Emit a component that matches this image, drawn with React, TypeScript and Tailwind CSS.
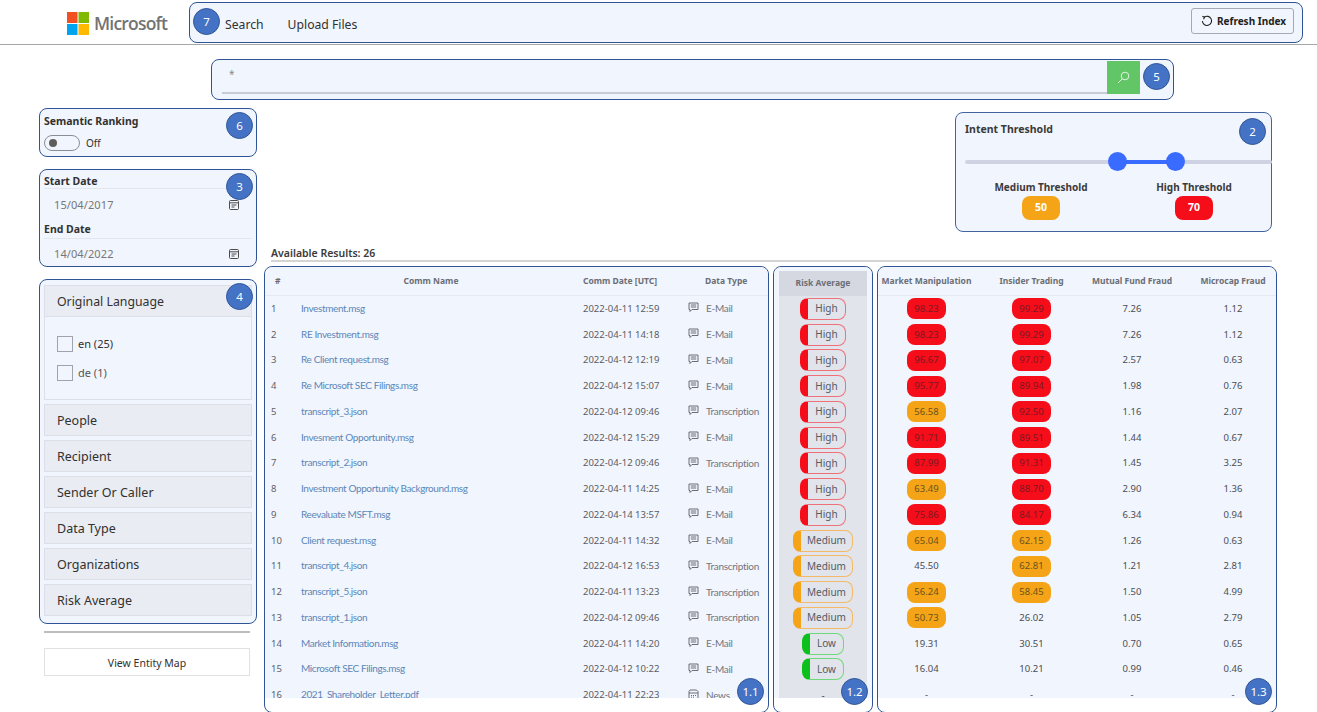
type Row = {
  id: number;
  name: string;
  date: string;
  type: string;
  risk: string;
  market: string;
  insider: string;
  mutual: string;
  microcap: string;
};

const E = "E-Mail";
const T = "Transcription";

const rows: Row[] = [
  { id: 1, name: "Investment.msg", date: "2022-04-11 12:59", type: E, risk: "High", market: "98.23", insider: "99.29", mutual: "7.26", microcap: "1.12" },
  { id: 2, name: "RE Investment.msg", date: "2022-04-11 14:18", type: E, risk: "High", market: "98.23", insider: "99.29", mutual: "7.26", microcap: "1.12" },
  { id: 3, name: "Re Client request.msg", date: "2022-04-12 12:19", type: E, risk: "High", market: "96.67", insider: "97.07", mutual: "2.57", microcap: "0.63" },
  { id: 4, name: "Re Microsoft SEC Filings.msg", date: "2022-04-12 15:07", type: E, risk: "High", market: "95.77", insider: "89.94", mutual: "1.98", microcap: "0.76" },
  { id: 5, name: "transcript_3.json", date: "2022-04-12 09:46", type: T, risk: "High", market: "56.58", insider: "92.50", mutual: "1.16", microcap: "2.07" },
  { id: 6, name: "Invesment Opportunity.msg", date: "2022-04-12 15:29", type: E, risk: "High", market: "91.71", insider: "89.51", mutual: "1.44", microcap: "0.67" },
  { id: 7, name: "transcript_2.json", date: "2022-04-12 09:46", type: T, risk: "High", market: "87.99", insider: "91.31", mutual: "1.45", microcap: "3.25" },
  { id: 8, name: "Investment Opportunity Background.msg", date: "2022-04-11 14:25", type: E, risk: "High", market: "63.49", insider: "88.70", mutual: "2.90", microcap: "1.36" },
  { id: 9, name: "Reevaluate MSFT.msg", date: "2022-04-14 13:57", type: E, risk: "High", market: "75.86", insider: "84.17", mutual: "6.34", microcap: "0.94" },
  { id: 10, name: "Client request.msg", date: "2022-04-11 14:32", type: E, risk: "Medium", market: "65.04", insider: "62.15", mutual: "1.26", microcap: "0.63" },
  { id: 11, name: "transcript_4.json", date: "2022-04-12 16:53", type: T, risk: "Medium", market: "45.50", insider: "62.81", mutual: "1.21", microcap: "2.81" },
  { id: 12, name: "transcript_5.json", date: "2022-04-11 13:23", type: T, risk: "Medium", market: "56.24", insider: "58.45", mutual: "1.50", microcap: "4.99" },
  { id: 13, name: "transcript_1.json", date: "2022-04-12 09:46", type: T, risk: "Medium", market: "50.73", insider: "26.02", mutual: "1.05", microcap: "2.79" },
  { id: 14, name: "Market Information.msg", date: "2022-04-11 14:20", type: E, risk: "Low", market: "19.31", insider: "30.51", mutual: "0.70", microcap: "0.65" },
  { id: 15, name: "Microsoft SEC Filings.msg", date: "2022-04-12 10:22", type: E, risk: "Low", market: "16.04", insider: "10.21", mutual: "0.99", microcap: "0.46" },
  { id: 16, name: "2021_Shareholder_Letter.pdf", date: "2022-04-11 22:23", type: "News", risk: "-", market: "-", insider: "-", mutual: "-", microcap: "-" },
];

const facets = ["People", "Recipient", "Sender Or Caller", "Data Type", "Organizations", "Risk Average"];

const Badge = ({ label, className }: { label: string; className: string }) => (
  <div
    className={`absolute z-10 flex h-[27px] w-[27px] items-center justify-center rounded-full border border-[#2f5597] bg-[#4472c4] text-[11.5px] text-white ${className}`}
  >
    {label}
  </div>
);

const CalendarIcon = () => (
  <svg width="12" height="12" viewBox="0 0 12 12" fill="none" stroke="#4a4a4a" strokeWidth="1">
    <rect x="1.5" y="1.5" width="9" height="9" rx="1" />
    <path d="M1.5 3.8h9M3.5 6h5M3.5 8h3" />
  </svg>
);

const MessageIcon = () => (
  <svg width="11" height="11" viewBox="0 0 11 11" fill="none" stroke="#5c5f66" strokeWidth="0.9">
    <path d="M1 1h9v6.5H4L2 9.5v-2H1z" />
    <path d="M2.8 3h5.4M2.8 5h5.4" />
  </svg>
);

const NewsIcon = () => (
  <svg width="11" height="11" viewBox="0 0 11 11" fill="none" stroke="#5c5f66" strokeWidth="0.9">
    <path d="M1 2.5 2 1h6.5L10 2.5V10H1z" />
    <path d="M1 4h9M3 6.5h1M5 6.5h1M7 6.5h1M3 8.2h1M5 8.2h1" />
  </svg>
);

const Panel = ({ className, children }: { className: string; children: React.ReactNode }) => (
  <div className={`relative h-[447px] rounded-[8px] border border-[#2f5597] bg-white ${className}`}>
    <div className="h-[431px] overflow-hidden rounded-t-[8px] bg-[#f1f5fd]">{children}</div>
  </div>
);

const riskStyles: Record<string, string> = {
  High: "w-[46px] border-[#f0707a] border-l-[#f50d1a]",
  Medium: "w-[60px] border-[#f5b968] border-l-[#f4a416]",
  Low: "w-[42px] border-[#6fd97a] border-l-[#0cc01c]",
};

const RiskPill = ({ risk }: { risk: string }) => {
  if (risk === "-") return <span className="text-[10px] text-[#555]">-</span>;
  return (
    <div
      className={`flex h-[22px] items-center justify-center rounded-[8px] border border-l-[8px] text-[10px] text-[#555a66] ${riskStyles[risk]}`}
    >
      {risk}
    </div>
  );
};

const Score = ({ value, className }: { value: string; className: string }) => {
  const n = parseFloat(value);
  let pill = "";
  if (n >= 70) pill = "h-[21px] w-[39px] rounded-[8px] bg-[#f50d1a] text-[#7b1a24]";
  else if (n >= 50) pill = "h-[21px] w-[39px] rounded-[8px] bg-[#f4a416] text-[#6a5320]";
  else pill = "text-[#4a4d55]";
  return (
    <div className={`flex h-full items-center justify-center ${className}`}>
      <span className={`flex items-center justify-center text-[9.5px] ${pill}`}>{value}</span>
    </div>
  );
};

const App = () => {
  return (
    <div className="relative h-[712px] w-[1317px] overflow-hidden bg-white font-['Noto_Sans',sans-serif] text-[#323130]">
      <header className="flex h-[45px] items-start border-b border-[#a6a6a6] pt-[2px]">
        <div className="ml-[67px] mt-[8px] flex w-[122px] items-center">
          <svg width="22" height="23" viewBox="0 0 22 23">
            <rect x="0" y="0" width="10.5" height="11" fill="#f25022" />
            <rect x="11.5" y="0" width="10.5" height="11" fill="#7fba00" />
            <rect x="0" y="12" width="10.5" height="11" fill="#00a4ef" />
            <rect x="11.5" y="12" width="10.5" height="11" fill="#ffb900" />
          </svg>
          <span className="ml-[5px] font-['Open_Sans',sans-serif] text-[17.5px] font-semibold tracking-[-0.8px] text-[#737373]">
            Microsoft
          </span>
        </div>
        <nav className="relative flex h-[41px] w-[1114px] items-center rounded-[8px] border border-[#2f5597] bg-[#f1f5fd] pl-[35px] pr-[8px]">
          <Badge label="7" className="left-[3px] top-[5px]" />
          <span className="mt-[5px] text-[12.2px]">Search</span>
          <span className="ml-[24px] mt-[5px] text-[12.2px]">Upload Files</span>
          <button className="-mt-[3px] ml-auto flex h-[26px] w-[103px] items-center justify-center gap-[4px] rounded-[3px] border border-[#a5a9b5] bg-[#f1f5fd] pl-[2px] text-[10px] font-bold text-[#201f1e]">
            <svg width="12" height="12" viewBox="0 0 12 12" fill="none" stroke="#201f1e" strokeWidth="1.1">
              <path d="M3.2 2.2A4.6 4.6 0 1 1 1.4 6" />
              <path d="M1.4 1.2 3.4 2.2 2.6 4.2" />
            </svg>
            Refresh Index
          </button>
        </nav>
      </header>

      <div className="relative ml-[211px] mt-[14px] flex h-[41px] w-[963px] items-start rounded-[8px] border border-[#2f5597] bg-[#f1f5fd] pl-[10px] pt-[1px]">
        <div className="flex h-[33px] w-[885px] items-start border-b-2 border-[#c8ccd6] pl-[7px] pt-[6px] text-[10px] text-[#8a8a8a]">
          *
        </div>
        <div className="flex h-[33px] w-[33px] items-center justify-center bg-[#62c667]">
          <svg width="13" height="13" viewBox="0 0 13 13" fill="none" stroke="#dff5e0" strokeWidth="1">
            <circle cx="8" cy="5" r="3.8" />
            <path d="M5.2 7.8 1 12" />
          </svg>
        </div>
        <Badge label="5" className="right-[3px] top-[3px]" />
      </div>

      <div className="flex">
        <aside className="ml-[39px] mt-[8px] w-[218px]">
          <div className="relative h-[49px] rounded-[8px] border border-[#2f5597] bg-[#f1f5fd] px-[4px] pt-[5px]">
            <div className="text-[10.5px] font-bold leading-[15px]">Semantic Ranking</div>
            <div className="mt-[6px] flex items-center gap-[6px]">
              <div className="flex h-[16px] w-[36px] items-center rounded-full border border-[#8a8d96] pl-[4px]">
                <div className="h-[8px] w-[8px] rounded-full bg-[#605e5c]" />
              </div>
              <span className="text-[10px]">Off</span>
            </div>
            <Badge label="6" className="right-[3px] top-[3px]" />
          </div>

          <div className="relative mt-[12px] h-[98px] rounded-[8px] border border-[#2f5597] bg-[#f1f5fd] px-[4px]">
            <div className="h-[19px] border-b border-[#e3e6ee] pt-[4px] text-[10.5px] font-bold leading-[15px]">Start Date</div>
            <div className="flex h-[32px] items-center justify-between pl-[10px] pr-[12px] text-[11px] tracking-[0.1px] text-[#777]">
              <span>15/04/2017</span>
              <CalendarIcon />
            </div>
            <div className="h-[18px] border-b border-[#e3e6ee] pt-[1px] text-[10.5px] font-bold leading-[15px]">End Date</div>
            <div className="flex h-[30px] items-center justify-between pl-[10px] pr-[12px] text-[11px] tracking-[0.1px] text-[#777]">
              <span>14/04/2022</span>
              <CalendarIcon />
            </div>
            <Badge label="3" className="right-[3px] top-[3px]" />
          </div>

          <div className="relative mt-[12px] h-[345px] rounded-[8px] border border-[#2f5597] bg-[#f1f5fd] px-[4px] pt-[5px]">
            <div className="flex h-[32px] items-center border border-[#dcdfe8] bg-[#e9ecf3] pl-[12px] pt-[2px] text-[12.3px]">Original Language</div>
            <div className="h-[83px] border-x border-b border-[#dcdfe8] pl-[12px] pt-[19px] text-[11px]">
              <label className="flex h-[16px] items-center gap-[5px]">
                <span className="h-[16px] w-[16px] border border-[#a0a3ab]" />
                en (25)
              </label>
              <label className="mt-[13px] flex h-[16px] items-center gap-[5px] text-[#555]">
                <span className="h-[16px] w-[16px] border border-[#a0a3ab]" />
                de (1)
              </label>
            </div>
            {facets.map((f) => (
              <div
                key={f}
                className="mt-[4px] flex h-[32px] items-center border border-[#dcdfe8] bg-[#e9ecf3] pl-[12px] pt-[2px] text-[12.5px]"
              >
                {f}
              </div>
            ))}
            <Badge label="4" className="right-[3px] top-[3px]" />
          </div>

          <div className="ml-[5px] mt-[7px] w-[206px] border-t-2 border-[#bdbdbd]" />
          <button className="ml-[5px] mt-[15px] h-[28px] w-[206px] border border-[#e1e1e1] bg-white pt-[3px] text-[10.5px] text-[#323130]">
            View Entity Map
          </button>
        </aside>

        <main className="ml-[7px] mt-[12px] w-[1013px]">
          <div className="flex justify-end pr-[5px]">
            <div className="relative h-[120px] w-[317px] rounded-[8px] border border-[#41639f] bg-[#f1f5fd] pl-[9px] pt-[9px]">
              <div className="text-[10.5px] font-bold leading-[15px] text-[#3b3a39]">Intent Threshold</div>
              <div className="relative mt-[23px] h-[4px] w-[307px] rounded-full bg-[#cfd2e3]">
                <div className="absolute left-[152px] top-0 h-[4px] w-[58px] bg-[#3a6bff]" />
                <div className="absolute left-[143px] top-[-8px] h-[19px] w-[19px] rounded-full bg-[#3a6bff]" />
                <div className="absolute left-[201px] top-[-8px] h-[19px] w-[19px] rounded-full bg-[#3a6bff]" />
              </div>
              <div className="mt-[16px] flex">
                <div className="ml-[15px] flex w-[122px] flex-col items-center">
                  <span className="text-[10px] font-bold leading-[14px] text-[#3b3a39]">Medium Threshold</span>
                  <span className="mt-[2px] flex h-[24px] w-[38px] items-center justify-center rounded-[8px] bg-[#f4a416] text-[10.5px] font-bold text-white">50</span>
                </div>
                <div className="ml-[31px] flex w-[122px] flex-col items-center">
                  <span className="text-[10px] font-bold leading-[14px] text-[#3b3a39]">High Threshold</span>
                  <span className="mt-[2px] flex h-[24px] w-[38px] items-center justify-center rounded-[8px] bg-[#f50d1a] text-[10.5px] font-bold text-white">70</span>
                </div>
              </div>
              <Badge label="2" className="right-[5px] top-[5px]" />
            </div>
          </div>

          <div className="ml-[7px] mt-[14px] h-[16px] w-[1001px] border-b-2 border-[#d4d4d4] text-[10.5px] font-semibold leading-[14px] text-[#3b3a39]">
            Available Results: 26
          </div>

          <div className="mt-[4px] flex">
            <Panel className="w-[505px]">
              <div className="flex h-[29px] items-center border-b border-[#e6e9f1] text-[8.5px] font-bold text-[#6b6e76]">
                <span className="w-[36px] pl-[10px]">#</span>
                <span className="w-[282px] pr-[22px] text-center">Comm Name</span>
                <span className="w-[105px]">Comm Date [UTC]</span>
                <span className="pl-[17px]">Data Type</span>
              </div>
              {rows.map((r) => (
                <div key={r.id} className="flex h-[25.75px] items-center text-[9.5px]">
                  <span className="w-[36px] pl-[6px] text-[#5f6068]">{r.id}</span>
                  <span className="-mt-[1px] w-[282px] font-['Lato',sans-serif] text-[10px] tracking-[-0.38px] text-[#5b87b8]">{r.name}</span>
                  <span className="w-[105px] text-[#5a5c64]">{r.date}</span>
                  <span className="-mt-[2px] w-[18px]">{r.type === "News" ? <NewsIcon /> : <MessageIcon />}</span>
                  <span className="font-['Lato',sans-serif] text-[10px] tracking-[-0.3px] text-[#72757d]">{r.type}</span>
                </div>
              ))}
            </Panel>

            <Panel className="ml-[4px] w-[100px]">
              <div className="mx-[5px] h-full">
                <div className="mt-[4px] flex h-[25px] items-center justify-center bg-[#d5d8e0] text-[8.5px] font-bold text-[#6b6e76]">
                  Risk Average
                </div>
                <div className="h-[420px] bg-[#e1e4ea]">
                  {rows.map((r) => (
                    <div key={r.id} className="flex h-[25.75px] items-center justify-center">
                      <RiskPill risk={r.risk} />
                    </div>
                  ))}
                </div>
              </div>
            </Panel>

            <Panel className="ml-[4px] w-[400px]">
              <div className="flex h-[29px] items-center border-b border-[#e6e9f1] text-center text-[8.5px] font-bold text-[#6b6e76]">
                <span className="w-[97px]">Market Manipulation</span>
                <span className="w-[113px]">Insider Trading</span>
                <span className="w-[88px]">Mutual Fund Fraud</span>
                <span className="w-[100px] pl-[14px]">Microcap Fraud</span>
              </div>
              {rows.map((r) => (
                <div key={r.id} className="flex h-[25.75px]">
                  <Score value={r.market} className="w-[97px]" />
                  <Score value={r.insider} className="w-[113px]" />
                  <div className="flex w-[88px] items-center justify-center text-[9.5px] text-[#4a4d55]">{r.mutual}</div>
                  <div className="flex w-[100px] items-center justify-center pl-[14px] text-[9.5px] text-[#4a4d55]">{r.microcap}</div>
                </div>
              ))}
            </Panel>
          </div>
        </main>
      </div>

      <Badge label="1.1" className="left-[737px] top-[678px]" />
      <Badge label="1.2" className="left-[841px] top-[678px]" />
      <Badge label="1.3" className="left-[1245px] top-[678px]" />
    </div>
  );
};

export default App;
